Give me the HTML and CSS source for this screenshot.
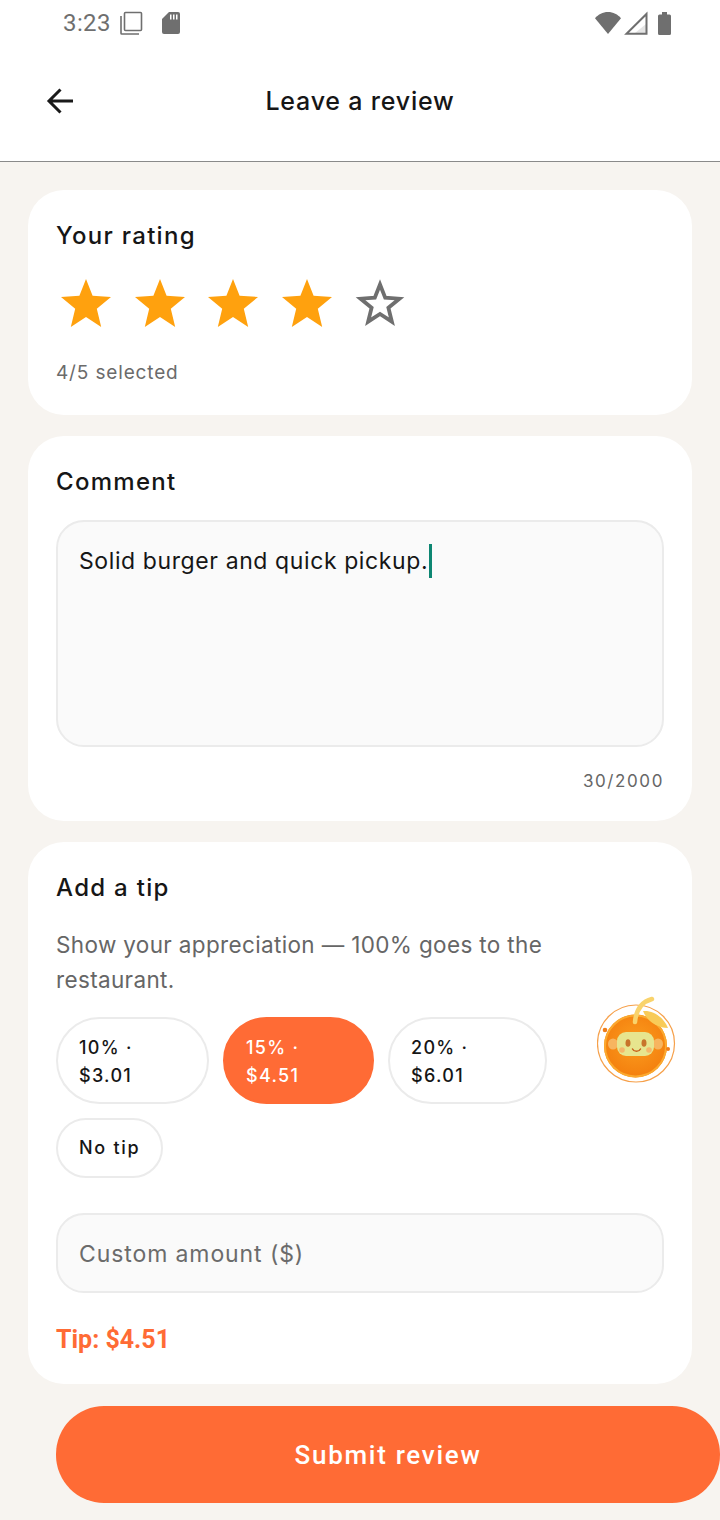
FILE: index.html
```html
<!DOCTYPE html>
<html lang="en">
<head>
    <meta charset="UTF-8">
    <meta name="viewport" content="width=device-width, initial-scale=1.0">
    <title>Leave a review</title>
    <link rel="stylesheet" href="styles.css">
</head>
<body>
    <div class="status-bar">
        <div class="status-left">
            <span class="time">3:23</span>
            <svg class="ic-copy" width="23" height="24" viewBox="0 0 23 24" fill="none" stroke="#6f6f6f" stroke-width="1.6">
                <rect x="4.500" y="1.500" width="17" height="18" rx="1"/>
                <path d="M1 5v17.200a.8.8 0 0 0 .8.8H19"/>
            </svg>
            <svg class="ic-sd" width="18" height="22" viewBox="0 0 18 22">
                <path fill="#6f6f6f" d="M7 0h9a2 2 0 0 1 2 2v18a2 2 0 0 1-2 2H2a2 2 0 0 1-2-2V7z"/>
                <path fill="#fff" d="M8 2.500h1.500v5H8zM11 2.500h1.500v5H11zM14 2.500h1.500v5H14z"/>
            </svg>
        </div>
        <div class="status-right">
            <svg class="ic-wifi" width="26" height="22" viewBox="0 0 30 23" preserveAspectRatio="none">
                <path fill="#6f6f6f" d="M0 6.500C3.800 2.500 9 0 15 0s11.200 2.500 15 6.500L15 23z"/>
            </svg>
            <svg class="ic-signal" width="24" height="24" viewBox="0 0 24 24">
                <path fill="#e4e4e4" d="M22 13v9H11z"/>
                <path fill="none" stroke="#6f6f6f" stroke-width="2" d="M22.500 3V22.800H2.500z"/>
            </svg>
            <svg class="ic-battery" width="13" height="23" viewBox="0 0 13 23">
                <path fill="#6f6f6f" d="M4 0h5v2.500h2.500A1.500 1.500 0 0 1 13 4v17.500a1.500 1.500 0 0 1-1.500 1.500h-10A1.500 1.500 0 0 1 0 21.500V4a1.500 1.500 0 0 1 1.500-1.500H4z"/>
            </svg>
        </div>
    </div>

    <header class="toolbar">
        <svg class="back" width="30" height="30" viewBox="0 0 30 30" fill="none" stroke="#1a1a1a" stroke-width="3">
            <path d="M28 15H4M15.500 3.500 4 15l11.500 11.500"/>
        </svg>
        <h1 class="toolbar-title">Leave a review</h1>
    </header>

    <main class="content">
        <section class="card card-rating">
            <h2 class="card-title">Your rating</h2>
            <div class="stars">
                <svg class="star" viewBox="0 0 50 48"><path class="star-on" d="M25 0l6.600 16.800L50 18l-14.200 11.700L40.200 48 25 37.900 9.800 48l4.400-18.300L0 18l18.400-1.200z"/></svg>
                <svg class="star" viewBox="0 0 50 48"><path class="star-on" d="M25 0l6.600 16.800L50 18l-14.200 11.700L40.200 48 25 37.900 9.800 48l4.400-18.300L0 18l18.400-1.200z"/></svg>
                <svg class="star" viewBox="0 0 50 48"><path class="star-on" d="M25 0l6.600 16.800L50 18l-14.200 11.700L40.200 48 25 37.900 9.800 48l4.400-18.300L0 18l18.400-1.200z"/></svg>
                <svg class="star" viewBox="0 0 50 48"><path class="star-on" d="M25 0l6.600 16.800L50 18l-14.200 11.700L40.200 48 25 37.900 9.800 48l4.400-18.300L0 18l18.400-1.200z"/></svg>
                <svg class="star" viewBox="0 0 50 48"><path class="star-off" d="M25 5.500l5.200 13.200 14.200 1-11 9 3.500 14L25 35l-11.900 7.700 3.500-14-11-9 14.200-1z"/></svg>
            </div>
            <p class="hint">4/5 selected</p>
        </section>

        <section class="card card-comment">
            <h2 class="card-title">Comment</h2>
            <div class="textarea">
                <span class="typed">Solid burger and quick pickup.</span><span class="caret"></span>
            </div>
            <p class="counter">30/2000</p>
        </section>

        <section class="card card-tip">
            <h2 class="card-title">Add a tip</h2>
            <p class="tip-desc">Show your appreciation — 100% goes to the restaurant.</p>
            <div class="chips">
                <div class="chip chip-10">10% ·<br>$3.01</div>
                <div class="chip chip-15 chip-active">15% ·<br>$4.51</div>
                <div class="chip chip-20">20% ·<br>$6.01</div>
                <div class="chip chip-none">No tip</div>
            </div>
            <div class="custom-input">Custom amount ($)</div>
            <p class="tip-total">Tip: $4.51</p>
        </section>

        <button class="submit">Submit review</button>
    </main>

    <svg class="mascot" width="80" height="88" viewBox="0 0 80 88">
        <defs>
            <radialGradient id="orange" cx="50%" cy="45%" r="55%">
                <stop offset="0" stop-color="#fb9d1e"/>
                <stop offset="1" stop-color="#f47f0e"/>
            </radialGradient>
        </defs>
        <circle cx="39" cy="48.500" r="38.500" fill="none" stroke="#f6a04a" stroke-width="1.200"/>
        <circle cx="38.500" cy="51" r="31.500" fill="url(#orange)"/>
        <circle cx="38.500" cy="51" r="30.500" fill="none" stroke="#fba92f" stroke-width="2"/>
        <path d="M38 27c1-11 6-20 17-23" fill="none" stroke="#f9d36c" stroke-width="4.500" stroke-linecap="round"/>
        <path d="M46 16c9-1 20 5 25 17-11 0-21-7-25-17z" fill="#f8cb58"/>
        <circle cx="8" cy="35" r="2.300" fill="#ef7d1a"/>
        <circle cx="71" cy="54" r="2" fill="#ef7d1a"/>
        <ellipse cx="16" cy="49" rx="5" ry="5.500" fill="#f7b560"/>
        <ellipse cx="61" cy="49" rx="5" ry="5.500" fill="#f7b560"/>
        <rect x="20" y="37" width="37" height="24" rx="9" fill="#e7e58e"/>
        <ellipse cx="31" cy="48" rx="2.500" ry="3.800" fill="#c8742a"/>
        <ellipse cx="47" cy="48" rx="2.500" ry="3.800" fill="#c8742a"/>
        <circle cx="25" cy="55" r="2.800" fill="#f5b76a"/>
        <circle cx="52" cy="55" r="2.800" fill="#f5b76a"/>
        <path d="M35.500 54c1.500 3 6.500 3 8 0" fill="none" stroke="#c8601a" stroke-width="1.500" stroke-linecap="round"/>
    </svg>
</body>
</html>
```

FILE: styles.css
```css
* {
    margin: 0;
    padding: 0;
    box-sizing: border-box;
}

html, body {
    height: 1520px;
    overflow: hidden;
}

body {
    position: relative;
    width: 720px;
    background-color: #f7f4f0;
    font-family: "Inter", "Liberation Sans", sans-serif;
    color: #161616;
}

.status-bar {
    height: 46px;
    padding: 0 49px 0 63px;
    background-color: #fff;
    display: flex;
    justify-content: space-between;
    align-items: center;
}

.status-left, .status-right {
    display: flex;
    align-items: center;
}

.time {
    font: 400 24px "Roboto", sans-serif;
    letter-spacing: 0.4px;
    color: #6f6f6f;
}

.ic-copy {
    margin-left: 9px;
}

.ic-sd {
    margin-left: 19px;
}

.ic-signal {
    margin-left: 3px;
}

.ic-battery {
    margin-left: 10px;
}

.toolbar {
    height: 116px;
    background-color: #fff;
    border-bottom: 1px solid #8a8a8a;
    position: relative;
    display: flex;
    align-items: center;
    justify-content: center;
    padding-bottom: 6px;
}

.back {
    position: absolute;
    left: 45px;
    top: 40px;
}

.toolbar-title {
    font-size: 25px;
    font-weight: 500;
    letter-spacing: 0.8px;
}

.content {
    padding: 28px 28px 0;
    display: flex;
    flex-direction: column;
    gap: 21px;
}

.card {
    background-color: #fff;
    border-radius: 36px;
    padding: 28px;
}

.card-rating {
    height: 225px;
}

.card-comment {
    height: 385px;
}

.card-tip {
    height: 542px;
}

.card-title {
    font-size: 24px;
    font-weight: 500;
    line-height: 36px;
    letter-spacing: 1.3px;
}

.stars {
    display: flex;
    gap: 23.500px;
    margin: 25px 0 0 5px;
}

.star {
    width: 50px;
    height: 48px;
    display: block;
}

.star-on {
    fill: #ffa10e;
}

.star-off {
    fill: none;
    stroke: #6f6f6f;
    stroke-width: 3.800;
}

.hint {
    font-size: 19px;
    color: #6b6b6b;
    margin-top: 31px;
    line-height: 30px;
    letter-spacing: 0.85px;
}

.textarea {
    height: 227px;
    margin-top: 20px;
    background-color: #fafafa;
    border: 2px solid #ebebeb;
    border-radius: 28px;
    padding: 22px 21px;
    font-size: 23px;
    line-height: 34px;
    letter-spacing: 0.6px;
    display: flex;
    align-items: flex-start;
}

.caret {
    width: 3px;
    height: 34px;
    background-color: #0d8672;
    margin-left: 1px;
}

.counter {
    text-align: right;
    font-size: 17px;
    color: #666;
    margin-top: 22px;
    line-height: 24px;
    letter-spacing: 1.600px;
}

.tip-desc {
    font-size: 22.500px;
    line-height: 35px;
    color: #666;
    margin-top: 21px;
    letter-spacing: 0.35px;
}

.chips {
    display: flex;
    flex-wrap: wrap;
    gap: 14px;
    margin-top: 20px;
}

.chip {
    border: 2px solid #ebebeb;
    border-radius: 44px;
    padding: 15px 21px;
    font-size: 18px;
    font-weight: 500;
    line-height: 28px;
    height: 87px;
    letter-spacing: 1.300px;
}

.chip-10 {
    width: 153px;
}

.chip-15 {
    width: 151px;
}

.chip-20 {
    width: 159px;
}

.chip-none {
    width: 107px;
    height: 60px;
    padding-top: 13px;
    line-height: 30px;
    border-radius: 30px;
    letter-spacing: 1.700px;
    white-space: nowrap;
}

.chip-active {
    background-color: #ff6b35;
    border-color: #ff6b35;
    color: #fff;
}

.custom-input {
    height: 80px;
    margin-top: 35px;
    background-color: #fafafa;
    border: 2px solid #ebebeb;
    border-radius: 28px;
    padding: 2px 21px 0;
    font-size: 23px;
    letter-spacing: 0.9px;
    color: #6b6b6b;
    display: flex;
    align-items: center;
}

.tip-total {
    font: 700 25px "Roboto", sans-serif;
    color: #ff6b35;
    margin-top: 32px;
}

.submit {
    width: 664px;
    height: 97px;
    margin: 1px 0 0 28px;
    background-color: #ff6b35;
    border: none;
    border-radius: 48px;
    color: #fff;
    font: 500 26px "Roboto", sans-serif;
    letter-spacing: 1.700px;
}

.mascot {
    position: absolute;
    left: 597px;
    top: 995px;
}
```
